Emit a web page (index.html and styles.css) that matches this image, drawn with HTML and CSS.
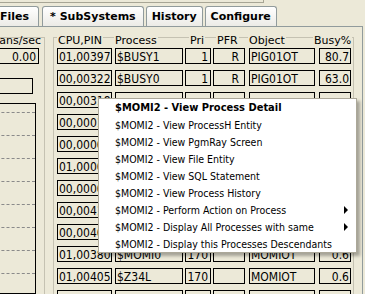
FILE: index.html
```html
<!DOCTYPE html>
<html lang="en">
<head>
  <meta charset="UTF-8" />
  <title>SubSystems</title>
  <link rel="stylesheet" href="styles.css">
</head>
<body>
  <div class="topstrip"></div>

  <div class="tabs">
    <div class="tab tab-files">Files</div>
    <div class="tab tab-sub">* SubSystems</div>
    <div class="tab">History</div>
    <div class="tab">Configure</div>
  </div>

  <div class="panel">
    <!-- transactions rate + graph -->
    <div class="rate-group">
      <div class="rate-label">Trans/sec</div>
      <div class="rate-box">0.00</div>
      <div class="small-box"></div>
      <div class="graph">
        <div class="grid-line"></div>
        <div class="grid-line"></div>
        <div class="grid-line"></div>
        <div class="grid-line"></div>
        <div class="grid-line"></div>
        <div class="grid-line"></div>
        <div class="grid-line"></div>
        <div class="grid-line"></div>
      </div>
    </div>

    <!-- process list -->
    <div class="proc-group">
      <div class="proc-head">
        <div class="h h-cpu"><span>CPU,PIN</span></div>
        <div class="h h-proc"><span>Process</span></div>
        <div class="h h-pri"><span>Pri</span></div>
        <div class="h h-pfr"><span>PFR</span></div>
        <div class="h h-obj"><span>Object</span></div>
        <div class="h h-busy"><span>Busy%</span></div>
      </div>

      <div class="rows">
        <div class="row">
          <div class="c cpu">01,00397</div><div class="c proc">$BUSY1</div><div class="c pri">1</div><div class="c pfr">R</div><div class="c obj">PIG01OT</div><div class="c busy">80.7</div>
        </div>
        <div class="row">
          <div class="c cpu">00,00322</div><div class="c proc">$BUSY0</div><div class="c pri">1</div><div class="c pfr">R</div><div class="c obj">PIG01OT</div><div class="c busy">63.0</div>
        </div>
        <div class="row">
          <div class="c cpu">00,00318</div><div class="c proc"></div><div class="c pri"></div><div class="c pfr"></div><div class="c obj"></div><div class="c busy"></div>
        </div>
        <div class="row">
          <div class="c cpu">00,00012</div><div class="c proc">$MOMI2</div><div class="c pri">170</div><div class="c pfr"></div><div class="c obj">MOMIOT</div><div class="c busy">2.1</div>
        </div>
        <div class="row">
          <div class="c cpu">00,00004</div><div class="c proc">$ZEXP</div><div class="c pri">180</div><div class="c pfr"></div><div class="c obj">OSIMAGE</div><div class="c busy">1.4</div>
        </div>
        <div class="row">
          <div class="c cpu">01,00006</div><div class="c proc">$ZNUP</div><div class="c pri">199</div><div class="c pfr"></div><div class="c obj">OSIMAGE</div><div class="c busy">1.1</div>
        </div>
        <div class="row">
          <div class="c cpu">00,00009</div><div class="c proc">$ZTC0</div><div class="c pri">200</div><div class="c pfr"></div><div class="c obj">TCPIP</div><div class="c busy">0.9</div>
        </div>
        <div class="row">
          <div class="c cpu">00,00412</div><div class="c proc">$MOMI1</div><div class="c pri">170</div><div class="c pfr"></div><div class="c obj">MOMIOT</div><div class="c busy">0.8</div>
        </div>
        <div class="row">
          <div class="c cpu">00,00407</div><div class="c proc">$MOMI3</div><div class="c pri">170</div><div class="c pfr"></div><div class="c obj">MOMIOT</div><div class="c busy">0.7</div>
        </div>
        <div class="row">
          <div class="c cpu">01,00380</div><div class="c proc">$MOMI0</div><div class="c pri">170</div><div class="c pfr"></div><div class="c obj">MOMIOT</div><div class="c busy">0.6</div>
        </div>
        <div class="row">
          <div class="c cpu">01,00405</div><div class="c proc">$Z34L</div><div class="c pri">170</div><div class="c pfr"></div><div class="c obj">MOMIOT</div><div class="c busy">0.6</div>
        </div>
        <div class="row">
          <div class="c cpu"></div><div class="c proc"></div><div class="c pri"></div><div class="c pfr"></div><div class="c obj"></div><div class="c busy"></div>
        </div>
      </div>
    </div>
  </div>

  <!-- context menu for the selected process -->
  <div class="menu">
    <div class="item default">$MOMI2 - View Process Detail</div>
    <div class="item">$MOMI2 - View ProcessH Entity</div>
    <div class="item">$MOMI2 - View PgmRay Screen</div>
    <div class="item">$MOMI2 - View File Entity</div>
    <div class="item">$MOMI2 - View SQL Statement</div>
    <div class="item">$MOMI2 - View Process History</div>
    <div class="item">$MOMI2 - Perform Action on Process<span class="arrow"></span></div>
    <div class="item">$MOMI2 - Display All Processes with same<span class="arrow"></span></div>
    <div class="item">$MOMI2 - Display this Processes Descendants</div>
  </div>
</body>
</html>
```

FILE: styles.css
```css
body {
  margin: 0;
  width: 365px;
  height: 294px;
  overflow: hidden;
  position: relative;
  background: #ece9d8;
  font-family: "DejaVu Sans", Verdana, sans-serif;
  font-size: 11px;
  color: #000;
}

/* remains of the panel above */
.topstrip {
  width: 263px;
  height: 2px;
  border-bottom: 1px solid #a7a595;
  border-right: 1px solid #a7a595;
}

/* tab strip */
.tabs {
  display: flex;
  margin-top: 3px;
  height: 20px;
}
.tab {
  height: 19px;
  line-height: 19px;
  padding: 0 5px;
  margin-right: 2px;
  border: 1px solid #919b9c;
  border-bottom: none;
  border-radius: 3px 3px 0 0;
  background: linear-gradient(#ffffff, #ecebe6);
  font-weight: bold;
  white-space: nowrap;
}
.tab-files {
  margin-left: -6px;
  margin-right: 3px;
  padding: 0 9px 0 5px;
}
.tab-sub {
  padding: 0 7px;
}

/* tab body */
.panel {
  display: flex;
  align-items: flex-start;
  margin-right: 2px;
  height: 257px;
  padding-top: 10px;
  border-top: 1px solid #919b9c;
  border-right: 1px solid #919b9c;
}

.rate-group {
  box-sizing: border-box;
  width: 65px;
  margin-left: -20px;
  height: 257px;
  border-top: 1px solid #c5c2b2;
  border-right: 1px solid #c5c2b2;
}
.rate-label {
  margin-top: -4px;
  height: 13px;
  line-height: 13px;
  text-align: right;
  padding-right: 3px;
}
.rate-box {
  margin: 1px 5px 0 0;
  height: 14px;
  border: 1px solid #000;
  text-align: right;
  padding-right: 2px;
  font-family: "DejaVu Sans Condensed", "DejaVu Sans", sans-serif;
  font-stretch: condensed;
  font-size: 12px;
  line-height: 17px;
  overflow: hidden;
}
.small-box {
  margin: 14px 11px 0 0;
  height: 14px;
  border: 1px solid #000;
}
.graph {
  box-sizing: border-box;
  margin: 9px 8px 0 0;
  height: 191px;
  overflow: hidden;
  border: 1px solid #000;
  display: flex;
  flex-direction: column;
  gap: 22px;
  padding-top: 8px;
}
.grid-line {
  border-top: 1px dashed #8a8a8a;
}

/* process list group */
.proc-group {
  box-sizing: border-box;
  flex: 1;
  margin-left: 8px;
  margin-right: 8px;
  height: 257px;
  border-top: 1px solid #c5c2b2;
  border-left: 1px solid #c5c2b2;
  border-right: 1px solid #c5c2b2;
}
.proc-head {
  display: flex;
  margin-top: -4px;
  height: 13px;
  line-height: 13px;
  padding-left: 3px;
}
.h span {
  background: #ece9d8;
  padding: 0 1px;
}
.h-cpu { width: 57px; }
.h-proc { width: 75px; }
.h-pri { width: 27px; }
.h-pfr { width: 32px; }
.h-obj { width: 65px; }
.h-busy { width: 40px; }

.rows {
  height: 246px;
  overflow: hidden;
  padding: 1px 0 0 3px;
  font-family: "DejaVu Sans Condensed", "DejaVu Sans", sans-serif;
  font-stretch: condensed;
  font-size: 12px;
}
.row {
  display: flex;
  margin-bottom: 6px;
}
.c {
  height: 14px;
  line-height: 17px;
  border: 1px solid #000;
  white-space: nowrap;
  overflow: hidden;
}
.cpu { width: 52px; padding-left: 1px; margin-right: 3px; }
.proc { width: 65px; padding-left: 1px; margin-right: 2px; }
.pri { width: 22px; padding-right: 2px; margin-right: 2px; text-align: right; }
.pfr { width: 25px; padding-right: 5px; margin-right: 4px; text-align: right; }
.obj { width: 63px; padding-left: 1px; margin-right: 4px; }
.busy { width: 29px; padding-right: 1px; text-align: right; }

/* popup menu */
.menu {
  position: absolute;
  left: 98px;
  top: 98px;
  width: 257px;
  background: #fff;
  border: 1px solid #aca899;
  box-shadow: 3px 3px 3px rgba(0, 0, 0, 0.3);
  font-family: "DejaVu Sans Condensed", "DejaVu Sans", sans-serif;
  font-stretch: condensed;
  font-size: 10.5px;
}
.item {
  display: flex;
  justify-content: space-between;
  align-items: center;
  height: 17px;
  padding: 0 8px 0 16px;
  white-space: nowrap;
}
.item.default {
  font-weight: bold;
  font-size: 11px;
}
.arrow {
  width: 0;
  height: 0;
  border-left: 4px solid #000;
  border-top: 4px solid transparent;
  border-bottom: 4px solid transparent;
}
```
